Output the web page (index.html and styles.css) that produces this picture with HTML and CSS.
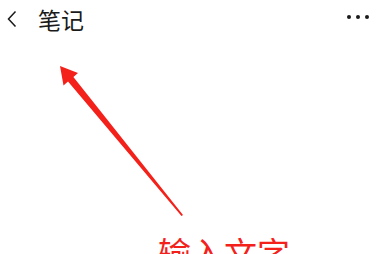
FILE: index.html
```html
<!DOCTYPE html>
<html lang="zh-CN">
<head>
    <meta charset="UTF-8">
    <meta name="viewport" content="width=device-width, initial-scale=1.0">
    <title>笔记</title>
    <link rel="stylesheet" href="styles.css">
</head>
<body>

    <div class="page">
        <div class="topbar">
            <svg class="back" width="12" height="16" viewBox="0 0 12 16">
                <path d="M9.5 0.5 L2.5 8 L9.5 15.5" fill="none" stroke="#1a1a1a" stroke-width="1.5"/>
            </svg>
            <span class="title">笔记</span>
            <span class="more">
                <i></i><i></i><i></i>
            </span>
        </div>

        <div class="hint">输入文字</div>

        <!-- annotation arrow -->
        <svg class="arrow" width="392" height="254" viewBox="0 0 392 254">
            <polygon points="60,66 78,73 73.4,77 183,215 181.5,216 68,81.4 63.5,85.5" fill="#f3211a"/>
        </svg>
    </div>

</body>
</html>
```

FILE: styles.css
```css
body {
    margin: 0;
    background: #ffffff;
    font-family: "Noto Sans CJK SC", "Noto Sans", sans-serif;
}

.page {
    position: relative;
    width: 392px;
    height: 254px;
    overflow: hidden;
}

.topbar {
    display: flex;
    align-items: center;
    height: 38px;
    padding: 0 23px 0 6px;
}

.back {
    display: block;
}

.title {
    margin-left: 20px;
    font-size: 23px;
    line-height: 38px;
    color: #1a1a1a;
}

.more {
    display: flex;
    gap: 5px;
    margin-left: auto;
    margin-top: -4px;
}

.more i {
    width: 4px;
    height: 4px;
    border-radius: 50%;
    background: #1a1a1a;
}

.hint {
    padding: 198px 0 0 158px;
    font-size: 33px;
    line-height: 33px;
    color: #f3211a;
}

.arrow {
    position: absolute;
    left: 0;
    top: 0;
}
```
